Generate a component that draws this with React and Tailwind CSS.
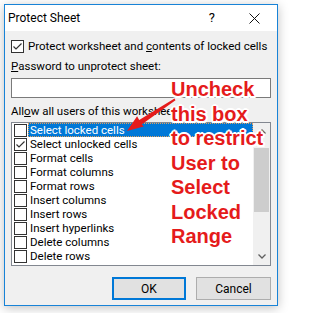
import React from 'react';

const rows = [
  { label: 'Select locked cells', checked: false, selected: true },
  { label: 'Select unlocked cells', checked: true },
  { label: 'Format cells', checked: false },
  { label: 'Format columns', checked: false },
  { label: 'Format rows', checked: false },
  { label: 'Insert columns', checked: false },
  { label: 'Insert rows', checked: false },
  { label: 'Insert hyperlinks', checked: false },
  { label: 'Delete columns', checked: false },
  { label: 'Delete rows', checked: false },
];

const CheckBox = ({ checked }) => (
  <div className="w-[13px] h-[13px] shrink-0 border border-[#333333] bg-white">
    {checked && (
      <svg width="11" height="11" viewBox="0 0 11 11" className="block">
        <polyline points="1.5,5.5 4,8 9.5,2.5" fill="none" stroke="#333333" strokeWidth="1.2" />
      </svg>
    )}
  </div>
);

const Chevron = ({ down }) => (
  <svg width="8" height="5" viewBox="0 0 8 5">
    <polyline
      points={down ? '0.5,0.5 4,4 7.5,0.5' : '0.5,4.5 4,1 7.5,4.5'}
      fill="none"
      stroke="#606060"
      strokeWidth="1.3"
    />
  </svg>
);

export default function App() {
  const outline =
    '[text-shadow:2px_0_0_#fff,-2px_0_0_#fff,0_2px_0_#fff,0_-2px_0_#fff,1.5px_1.5px_0_#fff,-1.5px_-1.5px_0_#fff,1.5px_-1.5px_0_#fff,-1.5px_1.5px_0_#fff]';

  return (
    <div className="relative min-h-screen bg-white pt-[4px] pl-[4px] font-['Roboto',sans-serif] text-[11.5px] text-black">
      {/* dialog window */}
      <div className="w-[274px] border border-[#1883d7] shadow-[0_2px_10px_rgba(0,0,0,0.25)] flex flex-col">
        <div className="h-[26px] bg-white flex items-center pl-[3px]">
          <span className="text-[12px] leading-[14px]">Protect Sheet</span>
          <span className="ml-auto mr-[34px] text-[13px] leading-[14px]">?</span>
          <svg width="11" height="11" viewBox="0 0 11 11" className="mr-[17px]">
            <path d="M0.5 0.5 L10.5 10.5 M10.5 0.5 L0.5 10.5" stroke="#111" strokeWidth="1" />
          </svg>
        </div>

        <div className="bg-[#f0f0f0] px-[6px] pt-[8px] pb-[5px] flex flex-col">
          <div className="h-[14px] flex items-center gap-[4px]">
            <CheckBox checked />
            <span className="leading-[14px] whitespace-nowrap">
              Protect worksheet and <span className="underline">c</span>ontents of locked cells
            </span>
          </div>

          <div className="mt-[6px] leading-[15px]">
            <span className="underline">P</span>assword to unprotect sheet:
          </div>
          <div className="mt-[4px] h-[20px] border border-[#7a7a7a] bg-white" />

          <div className="mt-[6px] leading-[15px] whitespace-nowrap">
            All<span className="underline">o</span>w all users of this worksheet to:
          </div>

          <div className="mt-[3px] h-[144px] border border-[#828790] bg-white flex">
            <div className="flex-1 flex flex-col">
              {rows.map((r) => (
                <div key={r.label} className="h-[14px] flex items-center">
                  <div className="ml-[2px]">
                    <CheckBox checked={r.checked} />
                  </div>
                  <div
                    className={
                      r.selected
                        ? 'ml-[1px] flex-1 h-[14px] px-[2px] flex items-center bg-[#0078d7] text-white outline-1 outline-dotted outline-[#e0a060] -outline-offset-1'
                        : 'ml-[1px] flex-1 h-[14px] px-[2px] flex items-center'
                    }
                  >
                    <span className="leading-[14px] whitespace-nowrap">{r.label}</span>
                  </div>
                </div>
              ))}
            </div>
            <div className="w-[17px] bg-[#f0f0f0] flex flex-col">
              <div className="h-[17px] flex items-center justify-center">
                <Chevron />
              </div>
              <div className="mt-[8px] mx-[1px] h-[64px] bg-[#cdcdcd]" />
              <div className="flex-1" />
              <div className="h-[17px] flex items-center justify-center">
                <Chevron down />
              </div>
            </div>
          </div>

          <div className="mt-[11px] flex justify-end gap-[10px]">
            <button className="w-[74px] h-[23px] border-2 border-[#0078d7] bg-[#e1e1e1] text-[12px] leading-[14px]">
              OK
            </button>
            <button className="w-[75px] h-[23px] border border-[#adadad] bg-[#e1e1e1] text-[12px] leading-[14px]">
              Cancel
            </button>
          </div>
        </div>
      </div>

      {/* red annotation over the dialog */}
      <svg className="absolute left-0 top-0 pointer-events-none" width="289" height="313" viewBox="0 0 289 313">
        <polygon points="174.5,98.5 175.5,100.2 141.7,124.6 143.7,126.5 127,131 137.1,116.2 139.2,120" fill="#e51b1b" />
      </svg>
      <div
        className={`absolute left-[171px] top-[77px] font-['Liberation_Sans',Arial,sans-serif] font-bold text-[20px] leading-[24.5px] text-[#e51b1b] whitespace-nowrap ${outline}`}
      >
        <div>Uncheck</div>
        <div>this box</div>
        <div>to restrict</div>
        <div>User to</div>
        <div>Select</div>
        <div>Locked</div>
        <div>Range</div>
      </div>
    </div>
  );
}
